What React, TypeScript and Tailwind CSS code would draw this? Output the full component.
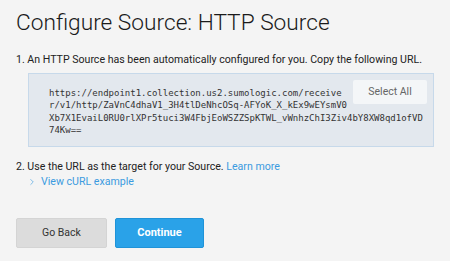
import { ChevronRight } from "lucide-react";

const URL_LINES = [
  "https://endpoint1.collection.us2.sumologic.com/receive",
  "r/v1/http/ZaVnC4dhaV1_3H4tlDeNhcOSq-AFYoK_X_kEx9wEYsmV0",
  "Xb7X1EvaiL0RU0rlXPr5tuci3W4FbjEoWSZZSpKTWL_vWnhzChI3Ziv4bY8XW8qd1ofVD",
  "74Kw==",
];

export default function App() {
  return (
    <div
      className="w-[450px] h-[261px] bg-[#f4f4f4] text-[#222] px-4 pt-[9px] overflow-hidden"
      style={{ fontFamily: "Roboto, 'Noto Sans', sans-serif" }}
    >
      {/* Title */}
      <h1 className="text-[22.7px] font-light leading-[28px] text-[#1a1a1a]">
        Configure Source: HTTP Source
      </h1>

      {/* Step 1 */}
      <p className="mt-[16px] text-[10.6px] leading-[14px] text-[#222] whitespace-nowrap">
        1. An HTTP Source has been automatically configured for you. Copy the following URL.
      </p>

      <div className="ml-3 mt-[6px] w-[406px] h-[74px] bg-[#e3e8ee] border border-[#c7d9ea] pl-5 pr-[6px] pt-[6px]">
        <button className="float-right w-[74px] h-[24px] bg-[#f4f6f8] text-[10.5px] text-[#666] rounded-[2px]">
          Select All
        </button>
        <div
          className="pt-[7px] text-[9px] leading-[12.3px] text-[#333]"
          style={{ fontFamily: "'DejaVu Sans Mono', 'Liberation Mono', monospace" }}
        >
          {URL_LINES.map((line) => (
            <div key={line} className="whitespace-nowrap">
              {line}
            </div>
          ))}
        </div>
      </div>

      {/* Step 2 */}
      <p className="mt-[13px] text-[10.6px] leading-[14px] text-[#222]">
        2. Use the URL as the target for your Source.{" "}
        <a className="text-[#3b9be0]">Learn more</a>
      </p>
      <div className="flex items-center mt-[1px] ml-[11px] text-[10.6px] leading-[14px] text-[#3b9be0]">
        <ChevronRight className="w-[10px] h-[10px]" strokeWidth={1.5} />
        <span className="ml-[4px]">View cURL example</span>
      </div>

      {/* Buttons */}
      <div className="flex gap-2 mt-[29px]">
        <button className="w-[91px] h-[30px] bg-[#dcdcdc] border border-[#d4d4d4] text-[10.5px] text-[#333] rounded-[2px]">
          Go Back
        </button>
        <button className="w-[89px] h-[30px] bg-[#2aa2e8] border border-[#1f93d8] text-[11px] font-bold text-white rounded-[2px]">
          Continue
        </button>
      </div>
    </div>
  );
}
